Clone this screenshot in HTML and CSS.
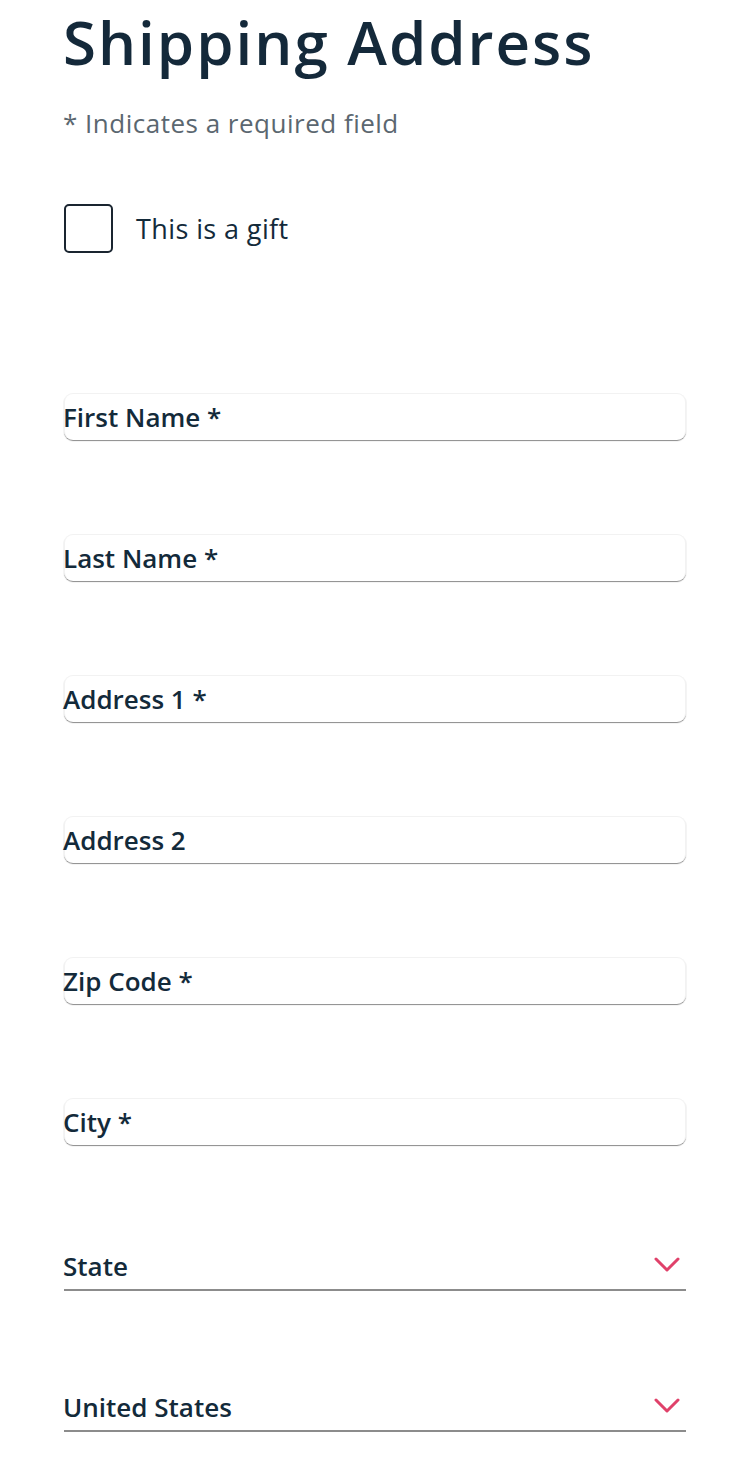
FILE: index.html
```html
<!DOCTYPE html>
<html>
<head>
<meta charset="utf-8">
<link rel="stylesheet" href="styles.css">
</head>
<body>
<main class="page">
  <h1 class="title">Shipping Address</h1>
  <p class="note">* Indicates a required field</p>
  <label class="gift">
    <span class="box"></span>
    <span class="gift-text">This is a gift</span>
  </label>
  <div class="fields">
    <div class="field"><span class="label">First Name *</span></div>
    <div class="field"><span class="label">Last Name *</span></div>
    <div class="field"><span class="label">Address 1 *</span></div>
    <div class="field"><span class="label">Address 2</span></div>
    <div class="field"><span class="label">Zip Code *</span></div>
    <div class="field"><span class="label">City *</span></div>
    <div class="select state"><span class="label">State</span>
      <svg class="chev" width="26" height="16" viewBox="0 0 26 16"><path d="M2 2 L13 13 L24 2" fill="none" stroke="#e0416a" stroke-width="3" stroke-linecap="round" stroke-linejoin="round"/></svg>
    </div>
    <div class="select country"><span class="label">United States</span>
      <svg class="chev" width="26" height="16" viewBox="0 0 26 16"><path d="M2 2 L13 13 L24 2" fill="none" stroke="#e0416a" stroke-width="3" stroke-linecap="round" stroke-linejoin="round"/></svg>
    </div>
  </div>
</main>
</body>
</html>
```
FILE: styles.css
```css
html, body { margin: 0; padding: 0; background: #fff; }
body { font-family: "Open Sans", "Lato", sans-serif; color: #132a3a; }
.page { padding: 0 64px; width: 622px; }
.title { margin: 0 0 0 -1px; padding-top: 6px; font-size: 60px; font-weight: 600; line-height: 72px; color: #14293a; letter-spacing: 2px; }
.note { margin: 30px 0 0 -1px; font-size: 26px; line-height: 30px; color: #5b6770; letter-spacing: 0.5px; }
.gift { display: flex; align-items: center; gap: 23px; margin-top: 66px; }
.box { width: 45px; height: 45px; border: 2px solid #1a2530; border-radius: 5px; }
.gift-text { font-size: 27px; letter-spacing: 0.4px; color: #132a3a; }
.fields { display: flex; flex-direction: column; gap: 94px; margin-top: 140px; }
.field { height: 47px; border: 1px solid #f2f2f2; border-bottom: none; border-radius: 9px; box-shadow: 0 1px 1px #8a8a8a; display: flex; align-items: flex-end; padding-bottom: 8px; box-sizing: border-box; }
.field .label { margin-left: -2px; }
.label { font-size: 26px; font-weight: 600; line-height: 30px; color: #132a3a; }
.select { height: 47px; border-bottom: 2px solid #8c8c8c; display: flex; align-items: flex-end; justify-content: space-between; padding-bottom: 8px; box-sizing: border-box; }
.select .label { margin-left: -1px; }
.state { margin-top: 5px; }
.chev { margin-right: 6px; margin-bottom: 8px; }
```
